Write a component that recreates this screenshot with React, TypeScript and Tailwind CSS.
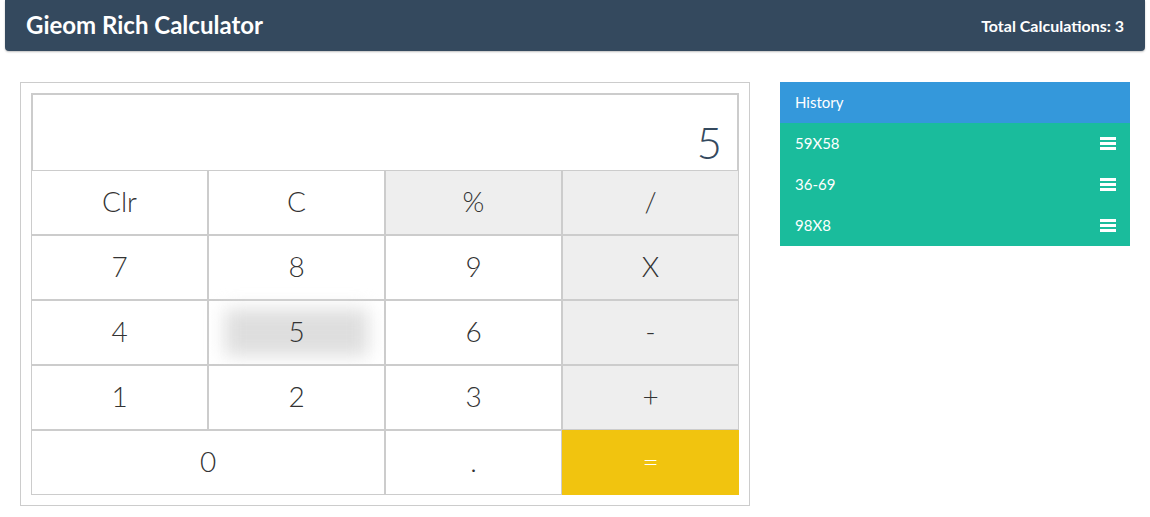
import React from 'react'

const font = { fontFamily: 'Lato, "Open Sans", sans-serif' }

type Key = { label: string; kind?: 'op' | 'eq'; span?: boolean; pressed?: boolean }

const keys: Key[] = [
  { label: 'Clr' },
  { label: 'C' },
  { label: '%', kind: 'op' },
  { label: '/', kind: 'op' },
  { label: '7' },
  { label: '8' },
  { label: '9' },
  { label: 'X', kind: 'op' },
  { label: '4' },
  { label: '5', pressed: true },
  { label: '6' },
  { label: '-', kind: 'op' },
  { label: '1' },
  { label: '2' },
  { label: '3' },
  { label: '+', kind: 'op' },
  { label: '0', span: true },
  { label: '.' },
  { label: '=', kind: 'eq' },
]

const history = ['59X58', '36-69', '98X8']

function Bars() {
  return (
    <svg width="16" height="13" viewBox="0 0 16 13" className="shrink-0">
      <rect x="0" y="0" width="16" height="3" fill="white" />
      <rect x="0" y="5" width="16" height="3" fill="white" />
      <rect x="0" y="10" width="16" height="3" fill="white" />
    </svg>
  )
}

function CalcKey({ k }: { k: Key }) {
  const bg =
    k.kind === 'eq'
      ? 'bg-[#f1c40f] border-[#f1c40f] text-white'
      : k.kind === 'op'
        ? 'bg-[#eeeeee] border-[#cccccc] text-[#333]'
        : 'bg-white border-[#cccccc] text-[#333]'
  return (
    <div
      className={`relative h-[65px] border flex items-center justify-center text-[28px] font-light pb-[4px] ${bg} ${
        k.span ? 'col-span-2' : ''
      }`}
    >
      {k.pressed && <div className="absolute left-[16px] right-[16px] top-[8px] bottom-[8px] bg-[#dedede] blur-[9px]" />}
      <span className="relative">{k.label}</span>
    </div>
  )
}

export default function App() {
  return (
    <div className="min-h-[517px] bg-white" style={font}>
      {/* Header */}
      <div className="mx-[5px] h-[51px] bg-[#34495e] rounded-b-[4px] shadow-[0_1px_2px_rgba(0,0,0,0.25)] flex items-center justify-between pl-[21px] pr-[21px]">
        <h1 className="text-white font-bold text-[24px] leading-none pb-[2px]">Gieom Rich Calculator</h1>
        <span className="text-white font-bold text-[16px] leading-none">Total Calculations: 3</span>
      </div>

      <div className="flex items-start gap-[30px] pl-[20px] pt-[31px]">
        {/* Calculator */}
        <div className="w-[730px] border border-[#cccccc] p-[10px]">
          <div className="h-[77px] border-2 border-b-0 border-[#cccccc] flex items-end justify-end pr-[15px] pb-[6px]">
            <span className="text-[44px] font-light text-[#34495e] leading-none">5</span>
          </div>
          <div className="grid grid-cols-4">
            {keys.map((k, i) => (
              <CalcKey key={i} k={k} />
            ))}
          </div>
        </div>

        {/* History */}
        <div className="w-[350px] text-white text-[15px]">
          <div className="h-[41px] bg-[#3498db] flex items-center px-[15px]">History</div>
          {history.map((h) => (
            <div key={h} className="h-[41px] bg-[#1abc9c] flex items-center justify-between pl-[15px] pr-[14px]">
              <span>{h}</span>
              <Bars />
            </div>
          ))}
        </div>
      </div>
    </div>
  )
}
